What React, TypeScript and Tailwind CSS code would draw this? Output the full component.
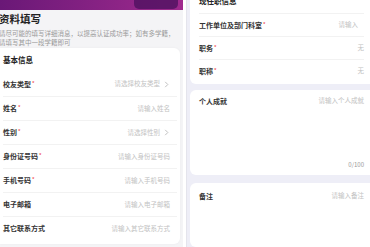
const FONT = "font-['Noto_Sans_CJK_SC','Noto_Sans',sans-serif]";

type Row = { label: string; placeholder: string; required?: boolean; select?: boolean };

const BASIC_ROWS: Row[] = [
  { label: "校友类型", placeholder: "请选择校友类型", required: true, select: true },
  { label: "姓名", placeholder: "请输入姓名", required: true },
  { label: "性别", placeholder: "请选择性别", required: true, select: true },
  { label: "身份证号码", placeholder: "请输入身份证号码", required: true },
  { label: "手机号码", placeholder: "请输入手机号码", required: true },
  { label: "电子邮箱", placeholder: "请输入电子邮箱" },
  { label: "其它联系方式", placeholder: "请输入其它联系方式" },
];

const JOB_ROWS: Row[] = [
  { label: "工作单位及部门科室", placeholder: "请输入", required: true },
  { label: "职务", placeholder: "无", required: true },
  { label: "职称", placeholder: "无", required: true },
];

const Label = ({ text, required }: { text: string; required?: boolean }) => (
  <span className="text-[7px] font-semibold text-[#333]">
    {text}
    {required && <span className="ml-[1px] align-top text-[5px] text-[#f05050]">*</span>}
  </span>
);

const Chevron = () => (
  <svg viewBox="0 0 8 8" className="ml-[3px] h-[7px] w-[7px] text-[#b0b0b0]">
    <path d="M2.5 1 L5.5 4 L2.5 7" fill="none" stroke="currentColor" strokeWidth="0.9" />
  </svg>
);

const LeftPanel = () => (
  <div className="flex w-[183px] shrink-0 flex-col bg-[#f4f4f6]">
    <div className="flex h-[10px] justify-end bg-gradient-to-r from-[#6a1877] to-[#a02a8e] pr-[5px]">
      <div className="h-[9px] w-[44px] rounded-b-[5px] bg-[#4f1160]/80" />
    </div>
    <div className="-ml-[1px] pt-[2px]">
      <h1 className="text-[10.5px] leading-[14px] font-bold text-[#222]">资料填写</h1>
      <p className="mt-[3px] text-[6.5px] leading-[8.5px] text-[#9a9a9a]">
        请尽可能的填写详细消息，以提高认证成功率；如有多学籍，
        <br />
        请填写其中一段学籍即可
      </p>
    </div>
    <div className="mt-[2px] mr-[3px] rounded-r-[6px] bg-white px-[3px] pb-[4px] shadow-[0_0_3px_rgba(0,0,0,0.04)]">
      <div className="flex h-[24px] items-center text-[7.5px] font-bold text-[#222]">基本信息</div>
      {BASIC_ROWS.map((row, i) => (
        <div
          key={row.label}
          className={`flex h-[24px] items-center justify-between pr-[7px] ${i > 0 ? "border-t border-[#f2f2f2]" : ""}`}
        >
          <Label text={row.label} required={row.required} />
          <span className="flex items-center text-[6.5px] text-[#c2c2c2]">
            {row.placeholder}
            {row.select && <Chevron />}
          </span>
        </div>
      ))}
    </div>
  </div>
);

const Card = ({ children, className = "" }: { children: React.ReactNode; className?: string }) => (
  <div className={`shrink-0 rounded-l-[6px] bg-white pl-[9px] pr-[6px] ${className}`}>{children}</div>
);

const RightPanel = () => (
  <div className="flex flex-1 flex-col border-l border-[#e4e4ec] bg-[#eeeef7] pl-[3px]">
    <Card className="-mt-[11px] pb-[2px]">
      <div className="flex h-[24px] items-center text-[7.5px] font-bold text-[#222]">现任职信息</div>
      {JOB_ROWS.map((row) => (
        <div key={row.label} className="flex h-[23px] items-center justify-between border-t border-[#f2f2f2]">
          <Label text={row.label} required={row.required} />
          <span className={`text-[6.5px] text-[#c2c2c2] ${row.placeholder === "无" ? "" : "pr-[6px]"}`}>
            {row.placeholder}
          </span>
        </div>
      ))}
    </Card>
    <Card className="mt-[6px] h-[85px]">
      <div className="flex h-[22px] items-center justify-between">
        <Label text="个人成就" />
        <span className="text-[6.5px] text-[#c2c2c2]">请输入个人成就</span>
      </div>
      <div className="mt-[49px] flex justify-end text-[6px] leading-[8px] text-[#999]">0/100</div>
    </Card>
    <Card className="mt-[8px] flex-1">
      <div className="flex h-[26px] items-center justify-between">
        <Label text="备注" />
        <span className="text-[6.5px] text-[#c2c2c2]">请输入备注</span>
      </div>
    </Card>
  </div>
);

export default function App() {
  return (
    <div className={`flex h-[247px] w-[370px] overflow-hidden bg-white ${FONT}`}>
      <LeftPanel />
      <div className="w-[3px] shrink-0 bg-white" />
      <RightPanel />
    </div>
  );
}
